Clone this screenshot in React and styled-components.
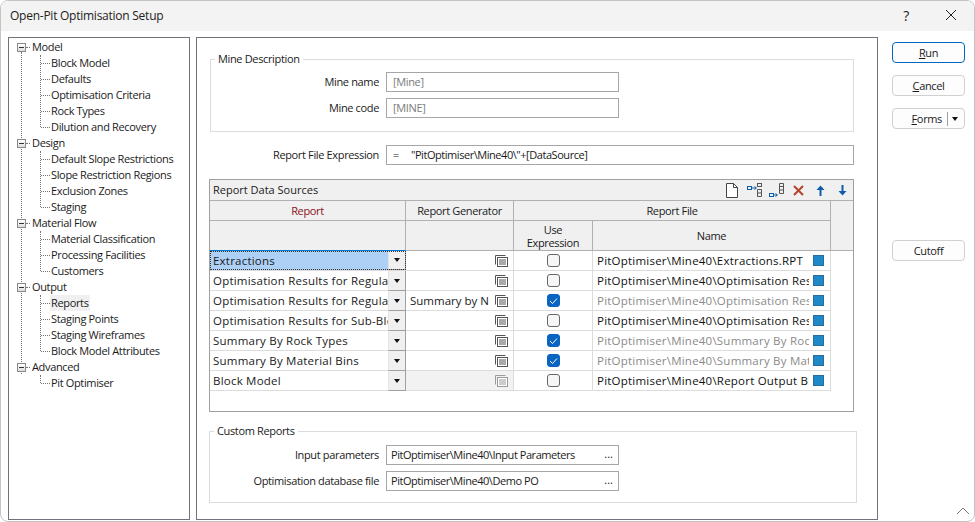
import React from 'react';
import styled, { createGlobalStyle } from 'styled-components';

const GlobalStyle = createGlobalStyle`
  html, body { margin: 0; padding: 0; background: #fff; }
  body { font-family: "Open Sans", "Noto Sans", sans-serif; font-size: 11px; letter-spacing: -0.35px; color: #1a1a1a; overflow: hidden; }
  * { box-sizing: border-box; }
`;

const tree = [
  { name: 'Model', items: ['Block Model', 'Defaults', 'Optimisation Criteria', 'Rock Types', 'Dilution and Recovery'] },
  { name: 'Design', items: ['Default Slope Restrictions', 'Slope Restriction Regions', 'Exclusion Zones', 'Staging'] },
  { name: 'Material Flow', items: ['Material Classification', 'Processing Facilities', 'Customers'] },
  { name: 'Output', items: ['Reports', 'Staging Points', 'Staging Wireframes', 'Block Model Attributes'] },
  { name: 'Advanced', items: ['Pit Optimiser'] },
];

const rows = [
  { report: 'Extractions', file: 'PitOptimiser\\Mine40\\Extractions.RPT', selected: true },
  { report: 'Optimisation Results for Regular Model', file: 'PitOptimiser\\Mine40\\Optimisation Results for Regular' },
  { report: 'Optimisation Results for Regular Model', generator: 'Summary by Nodes', file: 'PitOptimiser\\Mine40\\Optimisation Results', checked: true },
  { report: 'Optimisation Results for Sub-Blocks', file: 'PitOptimiser\\Mine40\\Optimisation Results for Sub' },
  { report: 'Summary By Rock Types', file: 'PitOptimiser\\Mine40\\Summary By Rock Types', checked: true },
  { report: 'Summary By Material Bins', file: 'PitOptimiser\\Mine40\\Summary By Material', checked: true },
  { report: 'Block Model', file: 'PitOptimiser\\Mine40\\Report Output Block', locked: true },
];

const ListIcon = ({ dim }) => (
  <svg width="13" height="12" viewBox="0 0 13 12" fill="none" stroke={dim ? '#9a9a9a' : '#555'} strokeWidth="1">
    <path d="M0.5 9.5V0.5H10.5" />
    <rect x="2.5" y="2.5" width="10" height="9" fill="#fff" />
    <path d="M4 5H11M4 7H11M4 9H11" />
  </svg>
);

const App = () => {
  return (
    <>
      <GlobalStyle />
      <Window>
        <TitleBar>
          <Title>Open-Pit Optimisation Setup</Title>
          <HelpMark>?</HelpMark>
          <CloseIcon width="12" height="12" viewBox="0 0 12 12">
            <path d="M1 1L11 11M11 1L1 11" stroke="#222" strokeWidth="1" fill="none" />
          </CloseIcon>
        </TitleBar>
        <Body>
          <TreePanel>
            {tree.map((group) => (
              <TreeGroup key={group.name}>
                <RootRow>
                  <Toggle />
                  <span>{group.name}</span>
                </RootRow>
                <Children>
                  {group.items.map((item) => (
                    <ChildRow key={item}>
                      <ChildText $active={item === 'Reports'}>{item}</ChildText>
                    </ChildRow>
                  ))}
                </Children>
              </TreeGroup>
            ))}
          </TreePanel>

          <MainPanel>
            <Group $left={0} $width={644} $height={81} $pad={5}>
              <GroupTitle>Mine Description</GroupTitle>
              <FieldRow $label={168}>
                <FieldLabel>Mine name</FieldLabel>
                <FieldBox $width={233} $muted>[Mine]</FieldBox>
              </FieldRow>
              <FieldRow $label={168}>
                <FieldLabel>Mine code</FieldLabel>
                <FieldBox $width={233} $muted>[MINE]</FieldBox>
              </FieldRow>
            </Group>

            <ExpressionRow $label={169}>
              <FieldLabel>Report File Expression</FieldLabel>
              <FieldBox $tight>
                <EqualSign>=</EqualSign>
                <span>"PitOptimiser\Mine40\"+[DataSource]</span>
              </FieldBox>
            </ExpressionRow>

            <GridPanel>
              <GridTitleBar>
                <GridTitle>Report Data Sources</GridTitle>
                <Toolbar>
                  <ToolSlot>
                    <svg width="12" height="15" viewBox="0 0 12 15" fill="#fff" stroke="#444">
                      <path d="M0.5 0.5H7.5L11.5 4.5V14.5H0.5Z" />
                      <path d="M7.5 0.5V4.5H11.5" fill="none" />
                    </svg>
                  </ToolSlot>
                  <ToolSlot>
                    <svg width="15" height="14" viewBox="0 0 15 14" fill="none">
                      <rect x="0.5" y="3.5" width="4" height="3" stroke="#0f5ca8" />
                      <path d="M4 5H9M7.5 3.5L9.5 5L7.5 6.5" stroke="#0f5ca8" />
                      <rect x="10.5" y="0.5" width="4" height="3" stroke="#555" />
                      <path d="M10.5 6.5H14.5V13.5H10.5ZM10.5 10H14.5" stroke="#555" />
                    </svg>
                  </ToolSlot>
                  <ToolSlot>
                    <svg width="15" height="14" viewBox="0 0 15 14" fill="none">
                      <rect x="0.5" y="10.5" width="4" height="3" stroke="#0f5ca8" />
                      <path d="M4 12H8M6.5 10.5L8.5 12L6.5 13.5" stroke="#0f5ca8" />
                      <path d="M10.5 0.5H14.5V10.5H10.5ZM10.5 3.5H14.5M10.5 7H14.5" stroke="#555" />
                    </svg>
                  </ToolSlot>
                  <ToolSlot>
                    <svg width="11" height="11" viewBox="0 0 11 11">
                      <path d="M1 1L10 10M10 1L1 10" stroke="#b5432e" strokeWidth="2" fill="none" />
                    </svg>
                  </ToolSlot>
                  <ToolSlot>
                    <svg width="9" height="11" viewBox="0 0 9 11">
                      <path d="M4.5 11V2" stroke="#0f5ca8" strokeWidth="2" fill="none" />
                      <path d="M0.5 5L4.5 0.5L8.5 5Z" fill="#0f5ca8" />
                    </svg>
                  </ToolSlot>
                  <ToolSlot>
                    <svg width="9" height="11" viewBox="0 0 9 11">
                      <path d="M4.5 0V9" stroke="#0f5ca8" strokeWidth="2" fill="none" />
                      <path d="M0.5 6L4.5 10.5L8.5 6Z" fill="#0f5ca8" />
                    </svg>
                  </ToolSlot>
                </Toolbar>
              </GridTitleBar>

              <HeadGrid>
                <HeadCell $accent>Report</HeadCell>
                <HeadCell>Report Generator</HeadCell>
                <HeadCell $span={2}>Report File</HeadCell>
                <HeadStub />
                <HeadCell $selected />
                <HeadCell />
                <HeadCell $tight>Use<br />Expression</HeadCell>
                <HeadCell>Name</HeadCell>
              </HeadGrid>

              {rows.map((row, i) => (
                <DataRow key={i}>
                  <ReportCell $selected={row.selected}>
                    <ReportText>{row.report}</ReportText>
                    <DropButton $selected={row.selected}><Caret /></DropButton>
                  </ReportCell>
                  <GeneratorCell $locked={row.locked}>
                    <GeneratorText>{row.generator}</GeneratorText>
                    <ListIcon dim={row.locked} />
                  </GeneratorCell>
                  <CheckCell>
                    <CheckBox $checked={row.checked}>
                      {row.checked && (
                        <svg width="9" height="8" viewBox="0 0 9 8">
                          <path d="M1 4L3.5 6.5L8 1.5" stroke="#fff" strokeWidth="1" fill="none" />
                        </svg>
                      )}
                    </CheckBox>
                  </CheckCell>
                  <NameCell>
                    <NameText $muted={row.checked}>{row.file}</NameText>
                    <ColourSwatch />
                  </NameCell>
                </DataRow>
              ))}
            </GridPanel>

            <Group $left={-1} $width={648} $height={80} $top={11} $pad={6}>
              <GroupTitle>Custom Reports</GroupTitle>
              <FieldRow $label={169}>
                <FieldLabel>Input parameters</FieldLabel>
                <FieldBox $width={233} $compact $tight>
                  <span>PitOptimiser\Mine40\Input Parameters</span>
                  <Dots>...</Dots>
                </FieldBox>
              </FieldRow>
              <FieldRow $label={169}>
                <FieldLabel>Optimisation database file</FieldLabel>
                <FieldBox $width={233} $compact $tight>
                  <span>PitOptimiser\Mine40\Demo PO</span>
                  <Dots>...</Dots>
                </FieldBox>
              </FieldRow>
            </Group>
          </MainPanel>

          <SideColumn>
            <SideButton $primary><u>R</u>un</SideButton>
            <SideButton><u>C</u>ancel</SideButton>
            <SplitButton>
              <SplitLabel><u>F</u>orms</SplitLabel>
              <SplitArrow><Caret /></SplitArrow>
            </SplitButton>
            <CutoffButton>Cutoff</CutoffButton>
          </SideColumn>
        </Body>
        <ResizeGrip width="14" height="8" viewBox="0 0 14 8">
          <path d="M1 7L7 1L13 7" stroke="#777" strokeWidth="1" fill="none" />
        </ResizeGrip>
      </Window>
    </>
  );
};

export default App;

const Window = styled.div`
  position: relative;
  width: 975px;
  height: 522px;
  background: #fff;
  border: 1px solid #c4c4c4;
  border-radius: 8px;
  overflow: hidden;
`;

const TitleBar = styled.div`
  height: 30px;
  background: #f3f3f3;
  display: flex;
  align-items: center;
  padding: 0 0 2px 9px;
`;

const Title = styled.div`
  flex: 1;
  font-size: 12px;
  letter-spacing: -0.25px;
  color: #222;
`;

const HelpMark = styled.div`
  font-size: 14px;
  margin-right: 36px;
`;

const CloseIcon = styled.svg`
  margin-right: 17px;
`;

const ResizeGrip = styled.svg`
  position: absolute;
  right: 4px;
  bottom: 6px;
`;

const Body = styled.div`
  display: flex;
  align-items: flex-start;
  padding: 6px 0 0 7px;
`;

const TreePanel = styled.div`
  position: relative;
  width: 182px;
  height: 483px;
  border: 1px solid #72727c;
  padding-top: 1px;
  flex-shrink: 0;

  &::before {
    content: '';
    position: absolute;
    left: 12px;
    top: 14px;
    height: 322px;
    border-left: 1px dotted #777;
  }
`;

const TreeGroup = styled.div`
  position: relative;
`;

const RootRow = styled.div`
  position: relative;
  height: 16px;
  line-height: 16px;
  padding-left: 23px;

  &::after {
    content: '';
    position: absolute;
    left: 17px;
    top: 8px;
    width: 4px;
    border-top: 1px dotted #777;
  }
`;

const Toggle = styled.span`
  position: absolute;
  z-index: 1;
  left: 8px;
  top: 4px;
  width: 9px;
  height: 9px;
  background: linear-gradient(#fff, #dcdcdc);
  border: 1px solid #8a8a8a;

  &::after {
    content: '';
    position: absolute;
    left: 1px;
    top: 3px;
    width: 5px;
    height: 1px;
    background: #333;
  }
`;

const Children = styled.div`
  position: relative;

  &::before {
    content: '';
    position: absolute;
    left: 31px;
    top: 0;
    bottom: 8px;
    border-left: 1px dotted #777;
  }
`;

const ChildRow = styled.div`
  position: relative;
  height: 16px;
  padding-left: 41px;

  &::before {
    content: '';
    position: absolute;
    left: 32px;
    top: 8px;
    width: 9px;
    border-top: 1px dotted #777;
  }
`;

const ChildText = styled.span`
  display: inline-block;
  height: 16px;
  line-height: 16px;
  padding: 0 1px;
  background: ${(p) => (p.$active ? '#f0f0f0' : 'transparent')};
`;

const MainPanel = styled.div`
  width: 682px;
  height: 483px;
  margin-left: 6px;
  padding: 13px 0 0 13px;
  border: 1px solid #72727c;
  flex-shrink: 0;
`;

const Group = styled.fieldset`
  width: ${(p) => p.$width}px;
  height: ${(p) => p.$height}px;
  margin: ${(p) => p.$top || 0}px 0 0 ${(p) => p.$left}px;
  padding: ${(p) => p.$pad}px 0 0;
  border: 1px solid #dcdcdc;
  display: flex;
  flex-direction: column;
  gap: 6px;
`;

const GroupTitle = styled.legend`
  margin-left: 4px;
  padding: 0 3px;
  line-height: 16px;
`;

const FieldRow = styled.div`
  display: grid;
  grid-template-columns: ${(p) => p.$label}px auto;
  justify-content: start;
  column-gap: 7px;
  align-items: center;
`;

const ExpressionRow = styled(FieldRow)`
  grid-template-columns: ${(p) => p.$label}px 468px;
  margin: 13px 0 0 0;
`;

const FieldLabel = styled.div`
  text-align: right;
  padding-bottom: 1px;
`;

const FieldBox = styled.div`
  display: flex;
  align-items: center;
  justify-content: ${(p) => (p.$compact ? 'space-between' : 'flex-start')};
  width: ${(p) => (p.$width ? `${p.$width}px` : 'auto')};
  height: 20px;
  padding: 0 ${(p) => (p.$compact ? '5px' : '6px')} 2px ${(p) => (p.$compact ? '4px' : '6px')};
  border: 1px solid #a6a6a6;
  letter-spacing: ${(p) => (p.$tight ? '-0.45px' : '-0.35px')};
  white-space: nowrap;
  color: ${(p) => (p.$muted ? '#7c7c7c' : '#1a1a1a')};
`;

const EqualSign = styled.span`
  width: 18px;
`;

const Dots = styled.span`
  line-height: 12px;
  letter-spacing: 0;
`;

const GridPanel = styled.div`
  width: 645px;
  height: 233px;
  margin: 14px 0 0 -1px;
  border: 1px solid #a0a0a0;
  flex-shrink: 0;
`;

const GridTitleBar = styled.div`
  display: flex;
  align-items: center;
  justify-content: space-between;
  height: 21px;
  padding-left: 3px;
  background: #f0f0f0;
  border-bottom: 1px solid #b0b0b0;
`;

const GridTitle = styled.div`
  letter-spacing: 0;
  padding-bottom: 2px;
`;

const Toolbar = styled.div`
  display: flex;
  align-items: center;
`;

const ToolSlot = styled.div`
  width: 22px;
  display: flex;
  align-items: center;
  justify-content: center;
`;

const HeadGrid = styled.div`
  display: grid;
  grid-template-columns: 196px 108px 79px 238px 22px;
  grid-template-rows: 20px 30px;
  background: #f0f0f0;
`;

const HeadCell = styled.div`
  grid-column: span ${(p) => p.$span || 1};
  display: flex;
  align-items: center;
  justify-content: center;
  text-align: center;
  line-height: ${(p) => (p.$tight ? '13px' : 'normal')};
  color: ${(p) => (p.$accent ? '#8a1020' : '#1a1a1a')};
  border-right: 1px solid #b0b0b0;
  border-bottom: 1px solid ${(p) => (p.$selected ? '#0078d4' : '#b0b0b0')};
`;

const HeadStub = styled.div`
  grid-row: span 2;
  border-bottom: 1px solid #b0b0b0;
`;

const DataRow = styled.div`
  display: grid;
  grid-template-columns: 196px 108px 79px 238px;
  grid-template-rows: 19px;
  width: 621px;
  height: 20px;
  border-bottom: 1px solid #dcdcdc;
  font-size: 11.5px;
  letter-spacing: 0.22px;
`;

const ReportCell = styled.div`
  display: flex;
  min-width: 0;
  height: 19px;
  background: ${(p) => (p.$selected ? '#aed0f5' : '#fff')};
  outline: ${(p) => (p.$selected ? '1px dotted #333' : 'none')};
  outline-offset: -1px;
`;

const ReportText = styled.div`
  flex: 1;
  min-width: 0;
  padding-left: 3px;
  overflow: hidden;
  white-space: nowrap;
  line-height: 19px;
`;

const DropButton = styled.div`
  width: 18px;
  height: ${(p) => (p.$selected ? '19px' : '20px')};
  display: flex;
  align-items: center;
  justify-content: center;
  background: #f0f0f0;
  border-left: 1px solid #e4e4e4;
  border-right: 1px solid #a0a0a0;
  border-bottom: 1px solid #a0a0a0;
`;

const Caret = styled.span`
  width: 0;
  height: 0;
  border-left: 3.5px solid transparent;
  border-right: 3.5px solid transparent;
  border-top: 4px solid #111;
`;

const GeneratorCell = styled.div`
  display: flex;
  align-items: center;
  justify-content: space-between;
  height: 19px;
  padding: 0 5px 0 4px;
  background: ${(p) => (p.$locked ? '#f2f2f2' : '#fff')};
  border-right: 1px solid #dcdcdc;
  min-width: 0;
`;

const GeneratorText = styled.div`
  overflow: hidden;
  white-space: nowrap;
  width: 79px;
  height: 19px;
  line-height: 19px;
  letter-spacing: 0;
`;

const CheckCell = styled.div`
  display: flex;
  align-items: center;
  justify-content: center;
  height: 19px;
  border-right: 1px solid #dcdcdc;
`;

const CheckBox = styled.div`
  width: 13px;
  height: 13px;
  display: flex;
  align-items: center;
  justify-content: center;
  border-radius: 3px;
  border: 1px solid ${(p) => (p.$checked ? '#0a64c2' : '#666')};
  background: ${(p) => (p.$checked ? '#0a64c2' : '#f6f6f6')};
`;

const NameCell = styled.div`
  display: flex;
  align-items: center;
  height: 19px;
  padding: 0 6px 0 4px;
  min-width: 0;
  border-right: 1px solid #dcdcdc;
`;

const NameText = styled.div`
  flex: 1;
  min-width: 0;
  height: 19px;
  overflow: hidden;
  white-space: nowrap;
  margin-right: 4px;
  line-height: 19px;
  color: ${(p) => (p.$muted ? '#8a8a8a' : '#111')};
`;

const ColourSwatch = styled.div`
  width: 11px;
  height: 11px;
  background: #1e88c9;
  border: 1px solid #2a6c9a;
  flex-shrink: 0;
`;

const SideColumn = styled.div`
  display: flex;
  flex-direction: column;
  gap: 12px;
  width: 73px;
  margin-left: 14px;
  padding-top: 5px;
`;

const SideButton = styled.div`
  height: 21px;
  display: flex;
  align-items: center;
  justify-content: center;
  background: #fdfdfd;
  border-radius: 4px;
  border: 1px solid ${(p) => (p.$primary ? '#0067c0' : '#d0d0d0')};
`;

const SplitButton = styled(SideButton)`
  justify-content: flex-end;
  padding-right: 2px;
`;

const SplitLabel = styled.span`
  padding-right: 5px;
  border-right: 1px solid #a0a0a0;
  line-height: 14px;
`;

const SplitArrow = styled.span`
  display: flex;
  width: 14px;
  justify-content: center;
`;

const CutoffButton = styled(SideButton)`
  margin-top: 99px;
`;
